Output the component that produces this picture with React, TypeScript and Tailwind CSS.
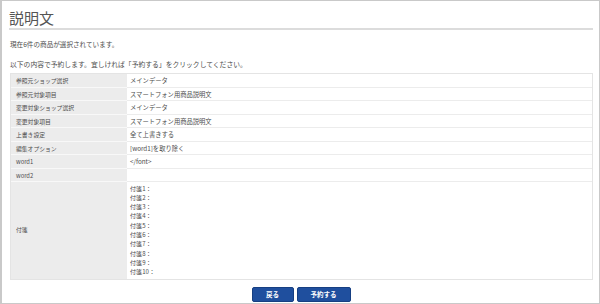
import React from "react";

const rows: [string, string][] = [
  ["参照元ショップ選択", "メインデータ"],
  ["参照元対象項目", "スマートフォン用商品説明文"],
  ["変更対象ショップ選択", "メインデータ"],
  ["変更対象項目", "スマートフォン用商品説明文"],
  ["上書き設定", "全て上書きする"],
  ["編集オプション", "[word1]を取り除く"],
  ["word1", "</font>"],
  ["word2", ""],
];

const fusen = Array.from({ length: 10 }, (_, i) => `付箋${i + 1}：`);

export default function App() {
  return (
    <div
      className="w-[600px] h-[304px] bg-white border-t border-r border-b border-l-2 border-[#c9c9c9] text-[#4d4d4d] overflow-hidden"
      style={{ fontFamily: '"Noto Sans CJK JP", "Noto Sans", sans-serif' }}
    >
      <div className="pl-[7px] pr-[6px]">
        <h1 className="text-[15px] leading-[15px] mt-[9px] pb-[2.5px] border-b-2 border-[#dcdcdc] text-[#555] font-normal">
          説明文
        </h1>
        <p className="text-[6.6px] leading-[10px] mt-[9.5px] ml-[1px]">現在6件の商品が選択されています。</p>
        <p className="text-[6.8px] leading-[10px] mt-[9.5px] ml-[1px]">
          以下の内容で予約します。宜しければ「予約する」をクリックしてください。
        </p>
        <div className="mt-[4.5px] ml-[1px] border border-[#e4e4e4]">
          {rows.map(([k, v], i) => (
            <div key={i} className="flex h-[13.5px] leading-[13px]">
              <div className="w-[116px] bg-[#ececec] border-b border-[#f8f8f8] pl-[5px] shrink-0 text-[5.8px]">{k}</div>
              <div className="flex-1 border-b border-[#ececec] pl-[3px] bg-white text-[6.3px]">{v}</div>
            </div>
          ))}
          <div className="flex">
            <div className="w-[116px] bg-[#ececec] pl-[5px] shrink-0 flex items-center text-[5.8px]">付箋</div>
            <div className="flex-1 pl-[3px] pt-[1.5px] pb-[2px] leading-[9.33px] bg-white text-[6.1px]">
              {fusen.map((f) => (
                <div key={f}>{f}</div>
              ))}
            </div>
          </div>
        </div>
        <div className="flex justify-center gap-[3px] mt-[7px]">
          <button className="w-[42px] h-[15px] rounded-[2px] bg-[#1f4f9e] border border-[#163f82] text-white text-[6.5px] font-bold leading-[13px]">
            戻る
          </button>
          <button className="w-[54px] h-[15px] rounded-[2px] bg-[#1f4f9e] border border-[#163f82] text-white text-[6.5px] font-bold leading-[13px]">
            予約する
          </button>
        </div>
      </div>
    </div>
  );
}
